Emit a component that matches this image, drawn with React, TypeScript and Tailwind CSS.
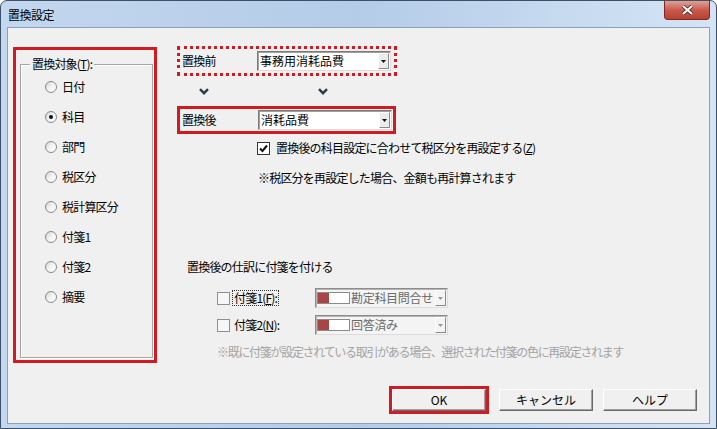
import React from 'react';

const font = { fontFamily: '"Noto Sans CJK JP", "Noto Sans", sans-serif' };

const Radio: React.FC<{ checked?: boolean }> = ({ checked }) => (
  <span className="w-[12px] h-[12px] rounded-full border border-[#8a8a8a] bg-gradient-to-br from-[#d4d4d4] via-[#f4f4f4] to-white flex items-center justify-center shrink-0">
    {checked && <span className="w-[4px] h-[4px] rounded-full bg-[#111]" />}
  </span>
);

const Check: React.FC<{ checked?: boolean; dim?: boolean }> = ({ checked, dim }) => (
  <span
    className={`w-[13px] h-[13px] border flex items-center justify-center shrink-0 ${
      dim ? 'border-[#8e8f8f] bg-[#f7f7f7]' : 'border-[#333] bg-white'
    }`}
  >
    {checked && (
      <svg width="11" height="11" viewBox="0 0 11 11">
        <path d="M2 5.5 L4.5 8 L9 2.5" fill="none" stroke="#111" strokeWidth="2" />
      </svg>
    )}
  </span>
);

const Arrow: React.FC<{ color?: string }> = ({ color = '#111' }) => (
  <svg width="5" height="3" viewBox="0 0 5 3">
    <polygon points="0,0 5,0 2.5,3" fill={color} />
  </svg>
);

const DropBtn: React.FC<{ dim?: boolean }> = ({ dim }) => (
  <span
    className={`w-[11px] h-[16px] ml-auto mr-[1px] border border-t-white border-l-white border-r-[#8a8a8a] border-b-[#8a8a8a] flex items-center justify-center shrink-0 ${
      dim ? 'bg-[#f4f4f4]' : 'bg-[#ececec]'
    }`}
  >
    <Arrow color={dim ? '#9a9a9a' : '#111'} />
  </span>
);

const Combo: React.FC<{ value: string }> = ({ value }) => (
  <div className="w-[134px] h-[20px] border border-t-[#7a7a7a] border-l-[#7a7a7a] border-r-[#dcdcdc] border-b-[#dcdcdc] bg-white flex items-center shadow-[inset_1px_1px_0_#a0a0a0]">
    <span className="pl-[2px] text-[12px] leading-none text-black tracking-normal">{value}</span>
    <DropBtn />
  </div>
);

const TagCombo: React.FC<{ value: string }> = ({ value }) => (
  <div className="w-[133px] h-[20px] border border-t-[#8c8c8c] border-l-[#8c8c8c] border-r-[#dcdcdc] border-b-[#dcdcdc] bg-[#f4f4f4] flex items-center shadow-[inset_1px_1px_0_#b4b4b4]">
    <span className="ml-[1px] w-[33px] h-[12px] border border-[#8a8a8a] bg-white flex shrink-0">
      <span className="w-[11px] h-full bg-[#a94545]" />
    </span>
    <span className="pl-[1px] text-[12px] leading-none text-[#6a6a6a] tracking-[-0.3px]">{value}</span>
    <DropBtn dim />
  </div>
);

const Chevron = () => (
  <svg width="10" height="7" viewBox="0 0 10 7">
    <path d="M1 1.2 L5 5.2 L9 1.2" fill="none" stroke="#2e3a4b" strokeWidth="2.4" />
  </svg>
);

const Button: React.FC<{ label: string }> = ({ label }) => (
  <button className="w-[94px] h-[22px] bg-[#f0f0f0] border border-t-white border-l-white border-r-[#696969] border-b-[#696969] shadow-[inset_-1px_-1px_0_#a0a0a0] text-[12px] text-black flex items-center justify-center">
    {label}
  </button>
);

const targets = ['日付', '科目', '部門', '税区分', '税計算区分', '付箋1', '付箋2', '摘要'];

export default function App() {
  return (
    <div
      style={font}
      className="w-[717px] h-[429px] border border-[#3d5068] rounded-t-[7px] bg-gradient-to-r from-[#c3d7ee] via-[#b4cce8] to-[#d4e4f5] flex flex-col overflow-hidden"
    >
      {/* title bar */}
      <div className="h-[26px] flex items-start justify-between">
        <span className="pl-[7px] pt-[5px] text-[12px] text-black tracking-[-0.5px]">置換設定</span>
        <span className="mr-[6px] w-[46px] h-[19px] rounded-b-[4px] border border-t-0 border-[#7a2a24] bg-gradient-to-b from-[#e0a096] via-[#c75b4d] to-[#b8412f] flex items-center justify-center">
          <svg width="13" height="10" viewBox="0 0 13 10">
            <path d="M2 1 L11 9 M11 1 L2 9" stroke="#4a1a14" strokeWidth="3.6" />
            <path d="M2 1 L11 9 M11 1 L2 9" stroke="#fff" strokeWidth="2.2" />
          </svg>
        </span>
      </div>

      {/* client area */}
      <div className="mx-[6px] h-[397px] border border-[#8ba0b9] bg-[#f0f0f0] flex flex-col text-[12px] text-black tracking-[-0.8px]">
        <div className="flex items-start">
          {/* left: target group */}
          <div className="ml-[5px] mt-[19px] w-[144px] h-[316px] border-[3px] border-[#cf1b22]">
            <fieldset className="ml-[4px] mt-[6px] w-[133px] h-[302px] border border-[#a5a5a5] shadow-[inset_1px_1px_0_white,1px_1px_0_white]">
              <legend className="ml-[9px] px-[2px] leading-[16px] bg-[#f0f0f0]">
                置換対象(<span className="underline">T</span>):
              </legend>
              {targets.map((t) => (
                <div key={t} className="h-[30px] pl-[24px] flex items-center gap-[5px]">
                  <Radio checked={t === '科目'} />
                  <span>{t}</span>
                </div>
              ))}
            </fieldset>
          </div>

          {/* right column */}
          <div className="ml-[20px] flex flex-col">
            <div className="mt-[18px] w-[220px] h-[30px] border-[3px] border-dotted border-[#cf1b22] flex items-center">
              <span className="pl-[2px] w-[77px]">置換前</span>
              <Combo value="事務用消耗品費" />
            </div>
            <div className="h-[30px] flex items-center pl-[22px]">
              <Chevron />
              <span className="ml-[109px]">
                <Chevron />
              </span>
            </div>
            <div className="w-[219px] h-[28px] border-[3px] border-[#cf1b22] flex items-center">
              <span className="pl-[2px] w-[78px]">置換後</span>
              <Combo value="消耗品費" />
            </div>
            <div className="mt-[4px] h-[20px] flex items-center ml-[80px] gap-[6px]">
              <Check checked />
              <span>
                置換後の科目設定に合わせて税区分を再設定する(<span className="underline">Z</span>)
              </span>
            </div>
            <div className="mt-[10px] h-[20px] flex items-center ml-[81px]">
              ※税区分を再設定した場合、金額も再計算されます
            </div>
            <div className="mt-[69px] h-[20px] flex items-center ml-[10px]">置換後の仕訳に付箋を付ける</div>
            <div className="mt-[11px] h-[20px] flex items-center ml-[40px]">
              <Check dim />
              <span className="w-[85px] pl-[2px] flex">
                <span className="px-[1px] border border-dotted border-[#333] leading-[14px]">
                  付箋1(<span className="underline">F</span>):
                </span>
              </span>
              <TagCombo value="勘定科目問合せ" />
            </div>
            <div className="mt-[7px] h-[20px] flex items-center ml-[40px]">
              <Check dim />
              <span className="w-[85px] pl-[4px]">
                付箋2(<span className="underline">N</span>):
              </span>
              <TagCombo value="回答済み" />
            </div>
            <div className="mt-[9px] h-[16px] flex items-center ml-[40px] text-[#a3a3a3] whitespace-nowrap tracking-[-1.3px]">
              ※既に付箋が設定されている取引がある場合、選択された付箋の色に再設定されます
            </div>
          </div>
        </div>

        {/* buttons */}
        <div className="mt-[23px] flex items-start justify-end pr-[12px] tracking-normal">
          <div className="border-[3px] border-[#cf1b22]">
            <Button label="OK" />
          </div>
          <div className="ml-[10px] mt-[3px]">
            <Button label="キャンセル" />
          </div>
          <div className="ml-[10px] mt-[3px]">
            <Button label="ヘルプ" />
          </div>
        </div>
      </div>
    </div>
  );
}
